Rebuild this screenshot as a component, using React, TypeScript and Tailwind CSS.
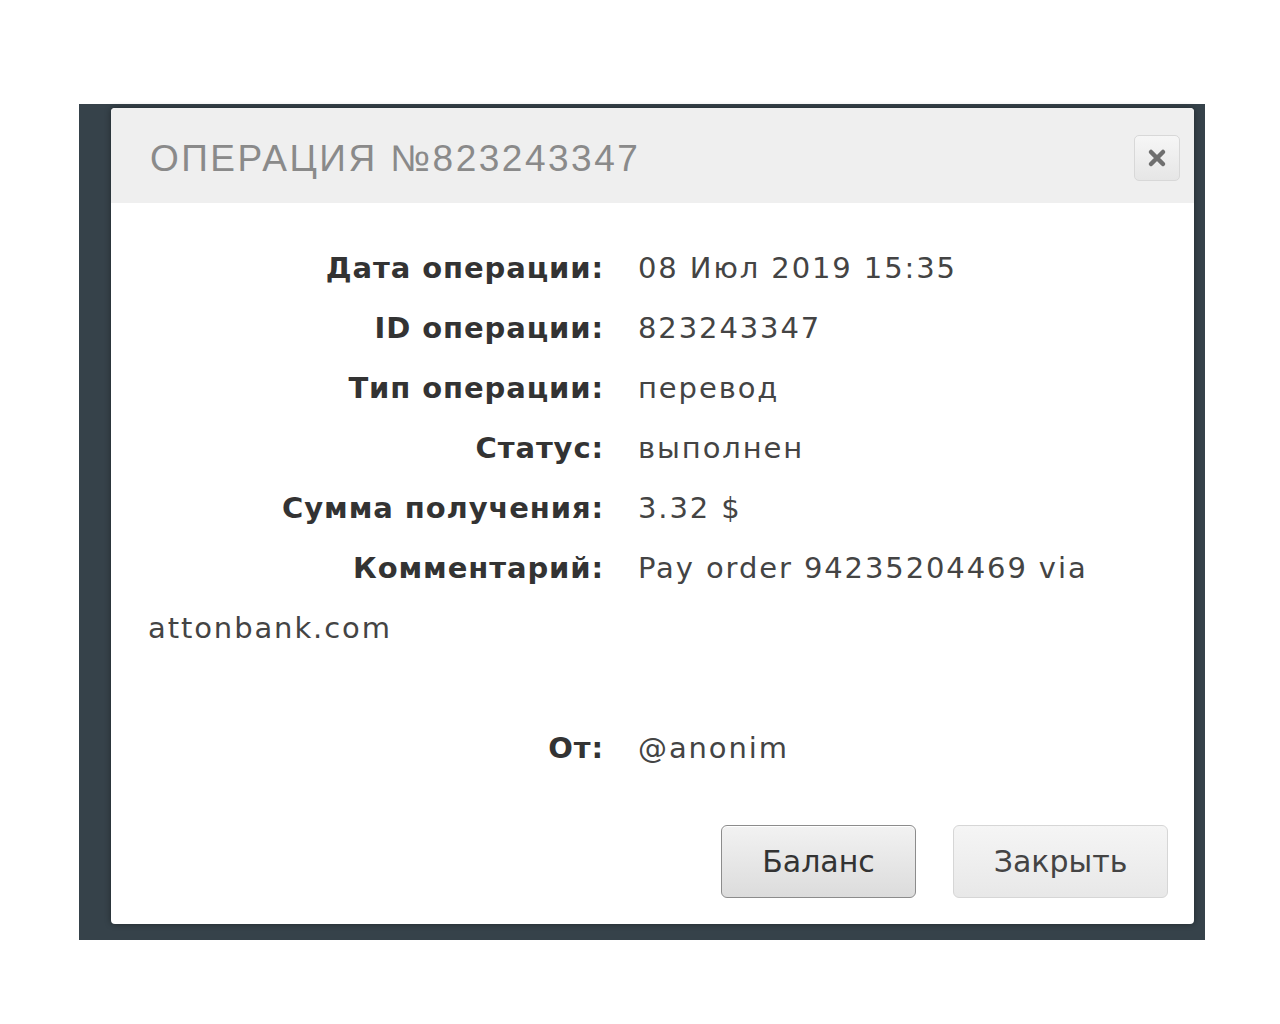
import React from 'react'

type Row = {
    label: string,
    value: string,
}

const rows: Row[] = [
    { label: 'Дата операции:', value: '08 Июл 2019 15:35' },
    { label: 'ID операции:', value: '823243347' },
    { label: 'Тип операции:', value: 'перевод' },
    { label: 'Статус:', value: 'выполнен' },
    { label: 'Сумма получения:', value: '3.32 $' },
]

function Label({ children }: { children: React.ReactNode }) {
    return (
        <span className="inline-block w-[456px] pr-[34px] box-content text-right font-bold tracking-[0.9px] text-[#333]">
            {children}
        </span>
    )
}

export default function App() {
    return (
        <div className="min-h-[1024px] w-full bg-white pt-[104px] pl-[79px]">
            <div className="w-[1126px] h-[836px] bg-[#36424a] pl-[32px] pt-[4px] pr-[11px] pb-[16px]">
                <div className="h-full rounded-[4px] bg-white shadow-[0_0_6px_rgba(0,0,0,0.4)] overflow-hidden flex flex-col">
                    <div className="h-[95px] shrink-0 bg-[#efefef] flex items-center justify-between pl-[39px] pr-[14px]">
                        <h1 className="mt-[5px] text-[37px] leading-none tracking-[2.5px] text-[#8a8a8a] font-['Liberation_Sans',sans-serif]">
                            ОПЕРАЦИЯ №823243347
                        </h1>
                        <button className="mt-[5px] w-[46px] h-[46px] rounded-[5px] border border-[#d8d8d8] bg-gradient-to-b from-[#f6f6f6] to-[#e6e6e6] flex items-center justify-center">
                            <svg width="20" height="20" viewBox="0 0 20 20">
                                <path d="M4 4 L16 16 M16 4 L4 16" stroke="#6f6f6f" strokeWidth="4.5" strokeLinecap="round" />
                            </svg>
                        </button>
                    </div>
                    <div className="flex-1 flex flex-col pl-[37px] pr-[26px] pt-[35px] pb-[26px] font-['DejaVu_Sans',sans-serif] text-[29px] leading-[60px] tracking-[1.9px] text-[#444]">
                        {rows.map((row) => (
                            <div key={row.label}>
                                <Label>{row.label}</Label>{row.value}
                            </div>
                        ))}
                        <div>
                            <Label>Комментарий:</Label>Pay order 94235204469 via attonbank.com
                        </div>
                        <div className="h-[60px]" />
                        <div>
                            <Label>От:</Label>@anonim
                        </div>
                        <div className="mt-auto flex justify-end gap-[37px] tracking-normal">
                            <button className="w-[195px] h-[73px] rounded-[6px] border border-[#8c8c8c] bg-gradient-to-b from-[#f2f2f2] to-[#dcdcdc] text-[30px] text-[#333] shadow-[inset_0_1px_0_#fff]">
                                Баланс
                            </button>
                            <button className="w-[215px] h-[73px] rounded-[6px] border border-[#d6d6d6] bg-gradient-to-b from-[#f5f5f5] to-[#e8e8e8] text-[30px] text-[#444]">
                                Закрыть
                            </button>
                        </div>
                    </div>
                </div>
            </div>
        </div>
    )
}
